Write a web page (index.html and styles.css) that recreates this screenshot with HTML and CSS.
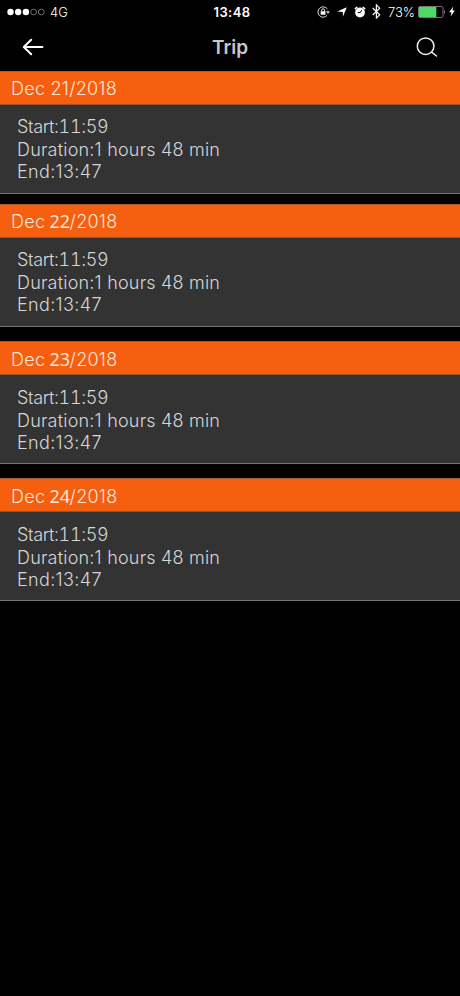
FILE: index.html
```html
<!DOCTYPE html>
<html lang="en">
<head>
    <meta charset="UTF-8">
    <meta name="viewport" content="width=device-width, initial-scale=1.0">
    <title>Trip</title>
    <link rel="stylesheet" href="styles.css">
</head>
<body>

    <div class="status-bar">
        <div class="status-left">
            <svg class="signal" width="39" height="8" viewBox="0 0 39 8">
                <g fill="#fff">
                    <circle cx="3.5" cy="4" r="3.2"/>
                    <circle cx="11.2" cy="4" r="3.2"/>
                    <circle cx="18.9" cy="4" r="3.2"/>
                </g>
                <g fill="none" stroke="#8a8a8a" stroke-width="0.8">
                    <circle cx="26.6" cy="4" r="2.9"/>
                    <circle cx="34.3" cy="4" r="2.9"/>
                </g>
            </svg>
            <span class="network">4G</span>
        </div>
        <span class="clock">13:48</span>
        <div class="status-right">
            <svg class="lock" width="13" height="12" viewBox="0 0 13 12">
                <path d="M10.4 3A5.2 5.2 0 1 0 10.2 9.3" fill="none" stroke="#ddd" stroke-width="1"/>
                <path d="M9.2 5.2h3.6L11 8z" fill="#ddd"/>
                <path d="M4.7 5.4V4.2a1.4 1.4 0 0 1 2.8 0v1.2" fill="none" stroke="#fff" stroke-width="0.9"/>
                <rect x="3.7" y="5.2" width="4.8" height="3.5" fill="#fff"/>
            </svg>
            <svg class="location" width="10" height="10" viewBox="0 0 10 10">
                <path d="M9.8 0.2L5.9 9.8V4.9L0.2 4.6z" fill="#fff"/>
            </svg>
            <svg class="alarm" width="12" height="12" viewBox="0 0 12 12">
                <circle cx="6" cy="6.5" r="4.9" fill="#fff"/>
                <path d="M0.9 3.2L3.2 1M11.1 3.2L8.8 1" stroke="#fff" stroke-width="1.6"/>
                <path d="M3.8 6.6h2.5L7.7 4" fill="none" stroke="#000" stroke-width="1"/>
            </svg>
            <svg class="bluetooth" width="9" height="15" viewBox="0 0 9 15">
                <path d="M0.7 4l7 6.8-3.3 3.3V0.9l3.3 3.3-7 6.8" fill="none" stroke="#fff" stroke-width="1.2"/>
            </svg>
            <span class="percent">73%</span>
            <svg class="battery" width="28" height="12" viewBox="0 0 28 12">
                <rect x="0.5" y="0.5" width="24.5" height="11" rx="1.5" fill="none" stroke="#777"/>
                <rect x="1" y="1" width="17.3" height="10" fill="#4cd964"/>
                <path d="M26.2 4v4c1.2-.6 1.2-3.4 0-4z" fill="#999"/>
            </svg>
            <svg class="bolt" width="6" height="11" viewBox="0 0 6 11">
                <path d="M4.3 0.4L0.1 6.2h2.4L1.5 10.6 5.9 4.6H3.4z" fill="#fff"/>
            </svg>
        </div>
    </div>

    <div class="nav">
        <button class="back" aria-label="Back">
            <svg width="22" height="18" viewBox="0 0 22 18">
                <path d="M20.4 9H2M9.2 1.8L1.8 9l7.4 7.2" fill="none" stroke="#fff" stroke-width="2" stroke-linecap="round" stroke-linejoin="round"/>
            </svg>
        </button>
        <h1>Trip</h1>
        <button class="search" aria-label="Search">
            <svg width="22" height="20" viewBox="0 0 22 20">
                <circle cx="9.6" cy="9.2" r="8.3" fill="none" stroke="#eee" stroke-width="1.5"/>
                <path d="M15.6 15.1l4.9 3.9" stroke="#eee" stroke-width="1.5" stroke-linecap="round"/>
            </svg>
        </button>
    </div>

    <div class="trips">
        <div class="trip">
            <h2>Dec 21/2018</h2>
            <div class="details">
                <p class="start">Start:11:59</p>
                <p>Duration:1 hours 48 min</p>
                <p class="end">End:13:47</p>
            </div>
        </div>
        <div class="trip">
            <h2>Dec <span class="day">22</span>/2018</h2>
            <div class="details">
                <p class="start">Start:11:59</p>
                <p>Duration:1 hours 48 min</p>
                <p class="end">End:13:47</p>
            </div>
        </div>
        <div class="trip low">
            <h2>Dec <span class="day">23</span>/2018</h2>
            <div class="details">
                <p class="start">Start:11:59</p>
                <p>Duration:1 hours 48 min</p>
                <p class="end">End:13:47</p>
            </div>
        </div>
        <div class="trip low">
            <h2>Dec <span class="day">24</span>/2018</h2>
            <div class="details">
                <p class="start">Start:11:59</p>
                <p>Duration:1 hours 48 min</p>
                <p class="end">End:13:47</p>
            </div>
        </div>
    </div>

</body>
</html>
```
FILE: styles.css
```css
* {
    box-sizing: border-box;
}

body {
    margin: 0;
    min-height: 996px;
    background: #000;
    color: #d6d6d6;
    font-family: Inter, "Liberation Sans", sans-serif;
}

svg {
    display: block;
    flex: none;
}

.status-bar {
    display: grid;
    grid-template-columns: 1fr auto 1fr;
    align-items: center;
    height: 23px;
    padding: 0 5px 0 7px;
    color: #fff;
    font-size: 13px;
}

.status-left, .status-right {
    display: flex;
    align-items: center;
}

.status-right {
    justify-content: flex-end;
}

.network {
    margin-left: 4px;
    font-weight: 300;
}

.clock {
    padding-left: 2px;
    font-weight: 600;
    letter-spacing: 0.4px;
}

.location {
    margin-left: 7px;
}

.alarm {
    margin-left: 7px;
}

.bluetooth {
    margin-left: 6px;
}

.percent {
    margin-left: 7px;
    font-weight: 300;
}

.battery {
    margin-left: 3px;
}

.bolt {
    margin-left: 3px;
}

.nav {
    display: grid;
    grid-template-columns: 1fr auto 1fr;
    align-items: center;
    height: 48px;
    padding: 0 22px;
}

.nav h1 {
    margin: 0;
    font-size: 19px;
    font-weight: 600;
    color: #c8c8c8;
}

button {
    padding: 0;
    border: none;
    background: none;
}

.search {
    justify-self: end;
}

.trip {
    height: 123px;
    margin-bottom: 10px;
    background: #333;
    border-bottom: 1px solid #777;
}

.trip:nth-child(n+2) {
    margin-bottom: 14px;
}

.trip h2 {
    height: 34px;
    margin: 0;
    padding-left: 11px;
    border-top: 1px solid #a85a30;
    border-bottom: 1px solid #a05028;
    background: #f65e10;
    color: #fbe6d8;
    font-size: 18px;
    font-weight: 300;
    letter-spacing: 0.25px;
    line-height: 33px;
}

.trip.low h2 {
    line-height: 35px;
}

.day {
    margin-left: -1px;
    margin-right: -0.5px;
    font-family: "Noto Sans", sans-serif;
    font-weight: 400;
    letter-spacing: 0;
}

.details {
    padding: 11px 17px;
    font-size: 18px;
    font-weight: 300;
    letter-spacing: 0.2px;
    line-height: 22.5px;
}

.low .details {
    padding-top: 12px;
}

.details p {
    margin: 0;
}

.details .start {
    font-variant-numeric: tabular-nums;
    letter-spacing: -0.35px;
}

.details .end {
    letter-spacing: 0.35px;
}
```
